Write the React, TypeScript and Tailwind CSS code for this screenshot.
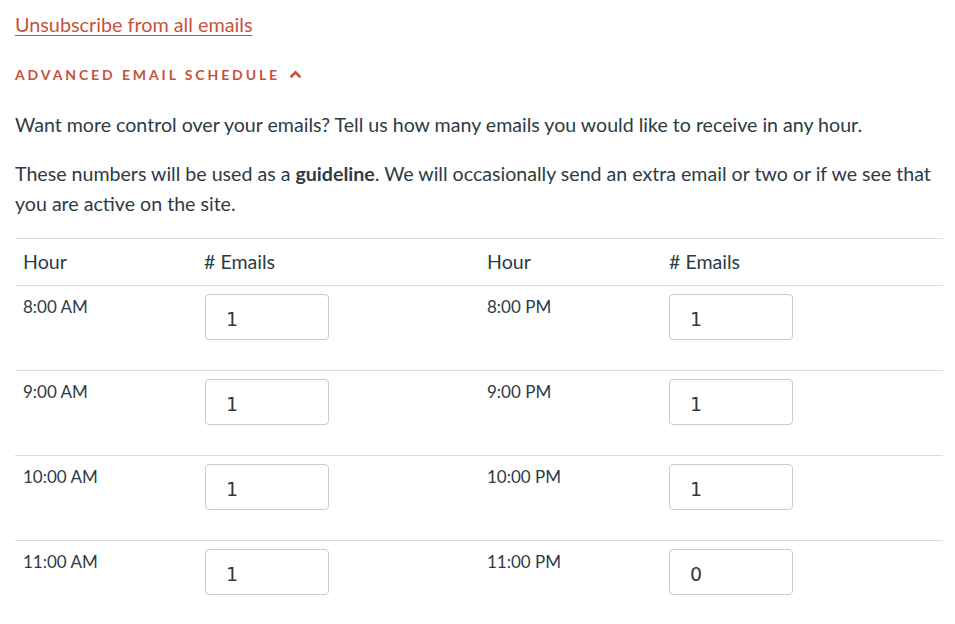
const rows = [
  ["8:00 AM", "1", "8:00 PM", "1"],
  ["9:00 AM", "1", "9:00 PM", "1"],
  ["10:00 AM", "1", "10:00 PM", "1"],
  ["11:00 AM", "1", "11:00 PM", "0"],
];

function NumInput({ value }: { value: string }) {
  return (
    <input
      type="text"
      defaultValue={value}
      className="w-[124px] h-[46px] rounded-[4px] border border-[#c7cdd1] bg-white pl-[20px] pt-[4px] text-[19px] text-[#2d3b45] font-['DejaVu_Sans',sans-serif] outline-none"
    />
  );
}

export default function App() {
  return (
    <div className="min-h-screen w-[943px] bg-white pl-[15px] pt-[9px] font-['Lato',sans-serif] text-[#2d3b45]">
      <a href="#" className="text-[19.8px] leading-[30px] text-[#c4533a] underline underline-offset-[3px]">
        Unsubscribe from all emails
      </a>
      <button className="mt-[25px] flex items-center gap-[9px] text-[14px] font-bold tracking-[2.9px] text-[#c4533a]">
        ADVANCED EMAIL SCHEDULE
        <svg width="13" height="9" viewBox="0 0 12 8" fill="none">
          <path d="M1.5 6.5 6 2l4.5 4.5" stroke="#c4533a" strokeWidth="2.4" />
        </svg>
      </button>
      <p className="mt-[25px] text-[19.6px] leading-[30px]">
        Want more control over your emails? Tell us how many emails you would like to receive in any hour.
      </p>
      <p className="mt-[19px] text-[19.6px] leading-[30px]">
        These numbers will be used as a <strong className="font-bold">guideline</strong>. We will occasionally send an extra email or two or if we see that you are active on the site.
      </p>
      <table className="mt-[19px] w-[928px] table-fixed border-collapse text-left">
        <colgroup>
          <col className="w-[181px]" />
          <col className="w-[283px]" />
          <col className="w-[182px]" />
          <col className="w-[282px]" />
        </colgroup>
        <thead>
          <tr className="h-[47px] border-y border-[#d8dcdf] text-[19.6px]">
            <th className="px-[8px] font-normal">Hour</th>
            <th className="px-[8px] font-normal"># Emails</th>
            <th className="px-[8px] font-normal">Hour</th>
            <th className="px-[8px] font-normal"># Emails</th>
          </tr>
        </thead>
        <tbody>
          {rows.map((r, i) => (
            <tr key={i} className="h-[85px] border-b border-[#d8dcdf] align-top text-[17px] last:border-b-0">
              <td className="px-[8px] pt-[8px]">{r[0]}</td>
              <td className="pl-[9px] pt-[8px]">
                <NumInput value={r[1]} />
              </td>
              <td className="px-[8px] pt-[8px]">{r[2]}</td>
              <td className="pl-[8px] pt-[8px]">
                <NumInput value={r[3]} />
              </td>
            </tr>
          ))}
        </tbody>
      </table>
    </div>
  );
}
